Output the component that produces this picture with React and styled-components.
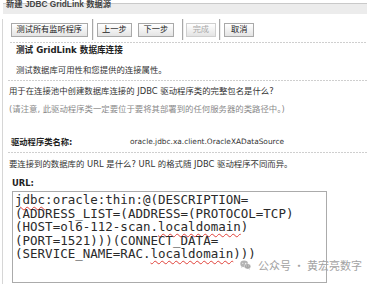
import React from "react";
import styled, { createGlobalStyle } from "styled-components";

const Global = createGlobalStyle`
  html, body { margin: 0; padding: 0; background: #fff; }
  body { width: 374px; height: 284px; overflow: hidden; }
`;

const CJK = `"DejaVu Sans", "Noto Sans CJK SC", sans-serif`;

const Page = styled.div`
  position: relative;
  width: 374px;
  height: 284px;
  overflow: hidden;
  background: #fff;
  font-family: ${CJK};
  color: #333;
`;

const Header = styled.div`
  box-sizing: border-box;
  margin: 3px 0 0 3px;
  width: 364px;
  height: 11px;
  border-top: 1px solid #c9c9c9;
  background: #ececec;
  padding-left: 3px;
`;

const Title = styled.div`
  margin-top: -4px;
  font-family: "Liberation Sans", "Noto Sans CJK SC", sans-serif;
  font-size: 8.3px;
  line-height: 9px;
  font-weight: bold;
  color: #444;
  white-space: nowrap;
`;

const Body = styled.div`
  margin-left: 2px;
  border-left: 1px solid #d6d6d6;
  height: 270px;
`;

const Toolbar = styled.div`
  display: flex;
  align-items: center;
  height: 21px;
  margin-top: 5px;
  padding-left: 8px;
`;

const Button = styled.div`
  box-sizing: border-box;
  height: 14px;
  padding: 0 ${(p) => p.$pad || 4.5}px;
  display: flex;
  align-items: center;
  font-size: 8.2px;
  line-height: 1;
  white-space: nowrap;
  border: 1px solid ${(p) => (p.$disabled ? "#cfcfcf" : "#a9a9a9")};
  background: linear-gradient(#ffffff, #e4e4e4);
  color: ${(p) => (p.$disabled ? "#a8a8a8" : "#222")};
  margin-right: ${(p) => p.$gap || 0}px;
`;

const Sep = styled.div`
  width: 0;
  height: 21px;
  border-left: 1px solid #a8a8a8;
  border-right: 1px solid #ededed;
  margin: 0 ${(p) => p.$mr}px 0 ${(p) => p.$ml}px;
`;

const Dotted = styled.div`
  height: 1px;
  margin-left: ${(p) => p.$indent}px;
  margin-top: ${(p) => p.$top}px;
  width: ${(p) => 364 - p.$indent}px;
  background-image: repeating-linear-gradient(
    to right,
    #cfcfcf 0 2px,
    transparent 2px 3px
  );
`;

const Heading = styled.div`
  margin: 2px 0 0 13px;
  font-size: 8.6px;
  line-height: 10px;
  font-weight: bold;
  color: #1e1e1e;
  white-space: nowrap;
`;

const Text = styled.div`
  margin-top: ${(p) => p.$top}px;
  padding-left: ${(p) => p.$indent}px;
  font-size: 8.4px;
  line-height: 10px;
  color: ${(p) => (p.$muted ? "#8a8a8a" : "#333")};
  white-space: nowrap;
`;

const FieldRow = styled.div`
  display: grid;
  grid-template-columns: 119px max-content;
  align-items: center;
  margin-top: 21px;
  padding-left: 8px;
  height: 10px;
  white-space: nowrap;
`;

const FieldLabel = styled.div`
  font-size: 8.3px;
  font-weight: bold;
  color: #1e1e1e;
`;

const FieldValue = styled.div`
  font-family: "DejaVu Sans", sans-serif;
  font-size: 7.4px;
  color: #333;
`;

const Label = styled.div`
  margin: 9px 0 0 9px;
  font-size: 8.4px;
  line-height: 10px;
  font-weight: bold;
  color: #1e1e1e;
`;

const UrlBox = styled.div`
  box-sizing: border-box;
  margin: 3px 0 0 9px;
  width: 315px;
  height: 92px;
  border: 1px solid #ababab;
  padding: 1px 0 0 2px;
  font-family: "DejaVu Sans Mono", monospace;
  font-size: 12.5px;
  line-height: 13.5px;
  color: #2a2a2a;
  white-space: pre;
`;

const Misspelled = styled.span`
  text-decoration: underline wavy #e0413a;
  text-decoration-thickness: 1px;
  text-underline-offset: 2px;
`;

const Watermark = styled.div`
  position: absolute;
  right: 12px;
  top: 257px;
  display: flex;
  align-items: center;
  gap: 7px;
  font-family: "Noto Sans CJK SC", sans-serif;
  font-size: 11px;
  line-height: 16px;
  color: #a3a3a3;
  white-space: nowrap;
`;

function WeChatIcon() {
  return (
    <svg width="11" height="10" viewBox="0 0 24 22">
      <ellipse cx="9" cy="8.5" rx="8.5" ry="7.2" fill="#b4b4b4" />
      <path d="M3.5 13.5 L2.5 17 L6.5 14.8 Z" fill="#b4b4b4" />
      <circle cx="6" cy="7" r="1.2" fill="#fff" />
      <circle cx="12" cy="7" r="1.2" fill="#fff" />
      <ellipse cx="16.5" cy="14" rx="7" ry="6" fill="#a8a8a8" stroke="#fff" strokeWidth="1" />
      <path d="M20.5 18.5 L22 21.5 L18 19.5 Z" fill="#a8a8a8" />
      <circle cx="14.2" cy="13" r="1" fill="#fff" />
      <circle cx="18.8" cy="13" r="1" fill="#fff" />
    </svg>
  );
}

export default function App() {
  return (
    <Page>
      <Global />
      <Header>
        <Title>新建 JDBC GridLink 数据源</Title>
      </Header>
      <Body>
        <Toolbar>
          <Button>测试所有监听程序</Button>
          <Sep $ml={4} $mr={3} />
          <Button $gap={6}>上一步</Button>
          <Button>下一步</Button>
          <Sep $ml={8} $mr={2} />
          <Button $disabled $pad={6}>完成</Button>
          <Sep $ml={3} $mr={3} />
          <Button $pad={6}>取消</Button>
        </Toolbar>
        <Dotted $indent={7} $top={2} />
        <Heading>测试 GridLink 数据库连接</Heading>
        <Text $top={10} $indent={13}>测试数据库可用性和您提供的连接属性。</Text>
        <Dotted $indent={5} $top={5} />
        <Text $top={5} $indent={6}>
          用于在连接池中创建数据库连接的 JDBC 驱动程序类的完整包名是什么?
        </Text>
        <Text $top={8} $indent={6} $muted>
          (请注意, 此驱动程序类一定要位于要将其部署到的任何服务器的类路径中。)
        </Text>
        <FieldRow>
          <FieldLabel>驱动程序类名称:</FieldLabel>
          <FieldValue>oracle.jdbc.xa.client.OracleXADataSource</FieldValue>
        </FieldRow>
        <Dotted $indent={5} $top={7} />
        <Text $top={6} $indent={6}>
          要连接到的数据库的 URL 是什么? URL 的格式随 JDBC 驱动程序不同而异。
        </Text>
        <Label>URL:</Label>
        <UrlBox>
          <Misspelled>jdbc</Misspelled>:oracle:thin:@(DESCRIPTION={"\n"}
          (ADDRESS_LIST=(ADDRESS=(PROTOCOL=TCP){"\n"}
          (HOST=ol6-112-scan.<Misspelled>localdomain</Misspelled>){"\n"}
          (PORT=1521)))(CONNECT_DATA={"\n"}
          (SERVICE_NAME=RAC.<Misspelled>localdomain</Misspelled>)))
        </UrlBox>
      </Body>
      <Watermark>
        <WeChatIcon />
        <span>公众号 · 黄宏亮数字</span>
      </Watermark>
    </Page>
  );
}
